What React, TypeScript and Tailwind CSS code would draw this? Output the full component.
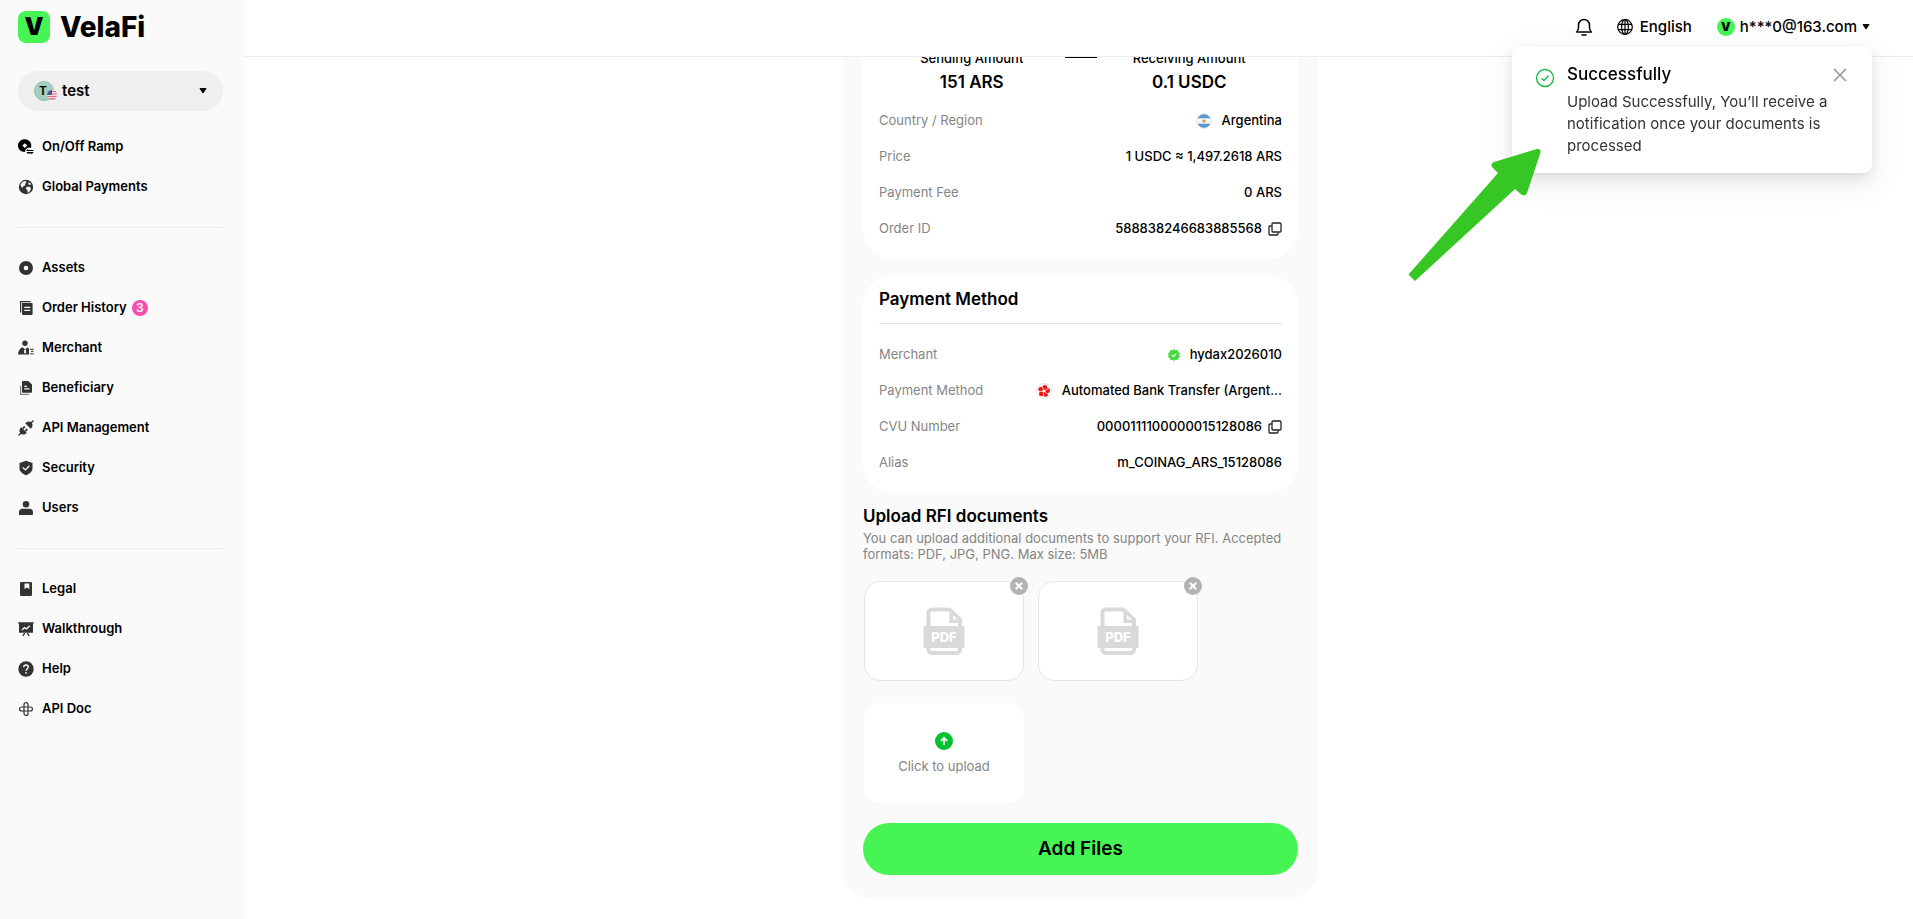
import type { ReactNode } from 'react'

function Icon({ children }: { children: ReactNode }) {
  return (
    <svg viewBox="0 0 16 16" className="size-4 shrink-0 text-[#333]" fill="currentColor" aria-hidden="true">
      {children}
    </svg>
  )
}

function Caret() {
  return (
    <svg viewBox="0 0 8 6" className="h-[6px] w-2 shrink-0" aria-hidden="true">
      <path d="M1 .5h6L4 5z" fill="#000" stroke="#000" strokeLinejoin="round" />
    </svg>
  )
}

const icons = {
  ramp: (
    <Icon>
      <path fill="#000" fillRule="evenodd" d="M6.800 .3a6.300 6.300 0 1 0 .4 12.500V11l2.200-2.200h3.500A6.300 6.300 0 0 0 6.800 .3Zm0 3.900 2.400 2.400-2.400 2.400-2.400-2.400Z" />
      <path fill="#000" d="m8 12 2.200-2.200v1.100h5.300V12zM15.700 13.100l-2.200 2.500v-1.200H8.800v-1.300z" />
    </Icon>
  ),
  globe: (
    <Icon>
      <circle cx="8" cy="8" r="7.200" />
      <path fill="#fafafa" d="M2.500 5.500C3.600 3.300 5.400 2.400 7.600 2.100l.8 1.500L6.900 5l.5 1.400-1.900.4-.6 1.600-1.600-.4ZM8.300 8.200l2.800-.6 2 1.900-1.300 2.700-1.800 1.700-.7-2.800-1.500-1.300ZM10.500 3.200l2.500 1.600-.6 1.300-2-.6Z" />
    </Icon>
  ),
  assets: (
    <Icon>
      <path fillRule="evenodd" d="M8 1a7 7 0 1 0 0 14A7 7 0 0 0 8 1Zm0 4.700a2.300 2.300 0 1 1 0 4.600 2.300 2.300 0 0 1 0-4.600Z" />
    </Icon>
  ),
  orders: (
    <Icon>
      <path d="M2.600 12.500V1.700h10" fill="none" stroke="currentColor" strokeWidth="1.200" />
      <path fillRule="evenodd" d="M4 3h9.800a.8.8 0 0 1 .8.800V14a1 1 0 0 1-1 1H5a1 1 0 0 1-1-1Zm2.300 3.800V8h6V6.800Zm0 3V11h6V9.800Z" />
    </Icon>
  ),
  merchant: (
    <Icon>
      <circle cx="7" cy="3.300" r="2.700" />
      <path fillRule="evenodd" d="M0 14.500c.2-3.700 1.800-6.300 4.500-7.300l2.500 2 2.500-1.700 1.500 1V14.500ZM6.400 9.500h1.400l.4 3-1.100 1.200L6 12.500Z" />
      <path d="M12 9.300h3.800M13 11.400h2.500M12 13.800h3.800" stroke="currentColor" strokeWidth="1" />
    </Icon>
  ),
  beneficiary: (
    <Icon>
      <path d="M2.600 6v8.300h8.600" fill="none" stroke="#888" strokeWidth="1.300" />
      <path fillRule="evenodd" d="M4.800 1h5.400L14 4.600V12a.8.8 0 0 1-.8.8H4.800a.8.8 0 0 1-.8-.8V1.800a.8.8 0 0 1 .8-.8Zm1.500 4.700v1.200H9V5.700Zm0 2.600v1.200h5.200V8.300Z" />
    </Icon>
  ),
  api: (
    <Icon>
      <path d="M.5 15.500 3 13M13 3 15.500.5" stroke="currentColor" strokeWidth="1.400" />
      <path d="M3.300 7.200 8.800 12.700 7.600 13.700C6 15 4 14.700 2.600 13.400 1.300 12 1 10 2.300 8.300ZM7.200 3.300 8.400 2.200C10 1 12 1.200 13.400 2.600 14.800 4 15 6 13.700 7.700L12.700 8.800Z" />
      <path d="m4.800 8.700 2-2M7.300 11.200l2-2" stroke="currentColor" strokeWidth="1.800" />
    </Icon>
  ),
  security: (
    <Icon>
      <path d="M8 .8 14.500 3v5.500c0 3-3 5.400-6.500 6.700-3.500-1.300-6.500-3.700-6.500-6.700V3Z" />
      <path d="m4.800 7.500 2.600 2.400 4-4.200" fill="none" stroke="#fafafa" strokeWidth="1.300" />
    </Icon>
  ),
  users: (
    <Icon>
      <circle cx="8" cy="4.200" r="3.300" />
      <path d="M1 15v-3.200C1 9.500 3 8.700 4.500 8.700h7c1.500 0 3.500.8 3.500 3.100V14a1 1 0 0 1-1 1Z" />
    </Icon>
  ),
  legal: (
    <Icon>
      <path d="M3.200 1h9.600a1.200 1.200 0 0 1 1.200 1.200v11.600a1.200 1.200 0 0 1-1.200 1.200H3.200A1.200 1.200 0 0 1 2 13.800V2.200A1.200 1.200 0 0 1 3.200 1Z" />
      <path d="M6.500 2.500h4.800V8L8.900 6.500 6.500 8Z" fill="#fafafa" />
    </Icon>
  ),
  walkthrough: (
    <Icon>
      <path d="M.3 1.200h15.400v1.600H15v9H1v-9H.3ZM4.300 15l1.500-3h1.500L5.800 15ZM10.200 15l-1.500-3h1.500l1.500 3Z" />
      <path d="m4 9 2.500-2.400 2 1.300 3.300-3.200" fill="none" stroke="#fafafa" strokeWidth="1.400" />
    </Icon>
  ),
  help: (
    <Icon>
      <circle cx="8" cy="8" r="7.700" />
      <path d="M5.700 6.300C5.700 4.800 6.700 4 8 4s2.300.8 2.300 2.100c0 1.500-2.200 1.800-2.200 3.600" fill="none" stroke="#fafafa" strokeWidth="1.400" />
      <circle cx="8.100" cy="11.800" r=".9" fill="#fafafa" />
    </Icon>
  ),
  doc: (
    <Icon>
      <g fill="none" stroke="currentColor" strokeWidth="1.200">
        <path d="M6 10V3.600a2 2 0 0 1 4 0V10M10 6v6.400a2 2 0 0 1-4 0V10" />
        <path d="M10 6h2.400a2 2 0 0 1 0 4H6M10 6H3.600a2 2 0 0 0 0 4H6" />
      </g>
    </Icon>
  ),
}

const navGroups: { icon: ReactNode; label: string; badge?: number }[][] = [
  [
    { icon: icons.ramp, label: 'On/Off Ramp' },
    { icon: icons.globe, label: 'Global Payments' },
  ],
  [
    { icon: icons.assets, label: 'Assets' },
    { icon: icons.orders, label: 'Order History', badge: 3 },
    { icon: icons.merchant, label: 'Merchant' },
    { icon: icons.beneficiary, label: 'Beneficiary' },
    { icon: icons.api, label: 'API Management' },
    { icon: icons.security, label: 'Security' },
    { icon: icons.users, label: 'Users' },
  ],
  [
    { icon: icons.legal, label: 'Legal' },
    { icon: icons.walkthrough, label: 'Walkthrough' },
    { icon: icons.help, label: 'Help' },
    { icon: icons.doc, label: 'API Doc' },
  ],
]

function Sidebar() {
  return (
    <aside className="min-h-screen w-[245px] shrink-0 bg-[#fafafa] pr-[22px] pl-[18px]">
      <a href="#" className="flex items-center gap-[10px] pt-[11px]">
        <span className="flex size-8 items-center justify-center rounded-lg bg-[#46f553] text-2xl leading-8 font-black">V</span>
        <span className="text-[28px] leading-8 font-extrabold">VelaFi</span>
      </a>
      <button className="mt-7 flex h-10 w-full items-center rounded-full bg-[#efefef] px-4 text-[15px] font-semibold">
        <span className="relative flex size-5 items-center justify-center rounded-full border border-[#8fbfae] bg-[#a3cfc0] text-xs">
          <span className="pr-[2px]">T</span>
          <svg viewBox="0 0 10 10" className="absolute -right-1 bottom-0 size-[10px]" aria-hidden="true">
            <circle cx="5" cy="5" r="5" fill="#f3dfe2" />
            <path d="M5 1.500h4M5 4h5M.3 6.500h9.400M1.500 8.800h7" stroke="#e0677a" strokeWidth="1.200" />
            <path d="M5 0a5 5 0 0 0-5 5h5Z" fill="#4a5b8c" />
          </svg>
        </span>
        <span className="ml-2 flex-1 text-left">test</span>
        <Caret />
      </button>
      <nav className="mt-4">
        {navGroups.map((group, i) => (
          <ul key={i} className={i > 0 ? 'mt-5 border-t border-[#ececec] pt-5' : ''}>
            {group.map((item) => (
              <li key={item.label}>
                <a href="#" className="flex h-10 items-center gap-2 text-[13px] font-semibold">
                  {item.icon}
                  {item.label}
                  {item.badge && (
                    <span className="-ml-[3px] flex size-4 items-center justify-center rounded-full bg-[#f650ae] text-xs text-white">
                      {item.badge}
                    </span>
                  )}
                </a>
              </li>
            ))}
          </ul>
        ))}
      </nav>
    </aside>
  )
}

function Header() {
  return (
    <header className="fixed top-0 right-0 left-[245px] z-10 flex h-[57px] items-center justify-end border-b border-[#ececec] bg-white pr-[43px] pb-[2px] text-[15px] font-medium">
      <button aria-label="Notifications">
        <svg viewBox="0 0 18 20" className="h-5 w-[18px]" fill="none" stroke="#000" strokeWidth="1.500" aria-hidden="true">
          <path d="M1.500 15c1.600-1.200 2-2.600 2-4.500V8a5.500 5.500 0 0 1 11 0v2.500c0 1.900.4 3.300 2 4.500Z" strokeLinejoin="round" />
          <path d="M7 18h4" strokeLinecap="round" />
        </svg>
      </button>
      <button className="ml-6 flex items-center gap-[7px]">
        <svg viewBox="0 0 16 16" className="size-4" fill="none" stroke="#000" strokeWidth="1.200" aria-hidden="true">
          <circle cx="8" cy="8" r="7.300" />
          <ellipse cx="8" cy="8" rx="3.400" ry="7.300" />
          <path d="M8 .7v14.600M1.300 5.300h13.400M1.300 10.700h13.400" />
        </svg>
        English
      </button>
      <button className="ml-[25px] flex items-center">
        <span className="flex size-[18px] items-center justify-center rounded-full bg-[#46f553] text-xs font-black">V</span>
        <span className="mr-[5px] ml-[5px]">h***0@163.com</span>
        <Caret />
      </button>
    </header>
  )
}

function CopyButton() {
  return (
    <button aria-label="Copy" className="ml-[6px]">
      <svg viewBox="0 0 14 14" className="size-[14px]" fill="none" stroke="#222" strokeWidth="1.300" aria-hidden="true">
        <rect x="4" y="1" width="9" height="9" rx="1" />
        <path d="M3.500 4H2a1 1 0 0 0-1 1v7a1 1 0 0 0 1 1h7a1 1 0 0 0 1-1v-1.500" />
      </svg>
    </button>
  )
}

function Row({ label, icon, value, copy }: { label: string; icon?: ReactNode; value: string; copy?: boolean }) {
  return (
    <div className="flex h-9 items-center justify-between text-[13px]">
      <dt className="text-[#858585]">{label}</dt>
      <dd className="flex items-center font-medium">
        {icon && <span className="mr-[10px]">{icon}</span>}
        {value}
        {copy && <CopyButton />}
      </dd>
    </div>
  )
}

const flag = (
  <svg viewBox="0 0 16 16" className="size-4" aria-hidden="true">
    <clipPath id="flag"><circle cx="8" cy="8" r="7" /></clipPath>
    <g clipPath="url(#flag)">
      <path d="M0 0h16v16H0z" fill="#f4f4f4" />
      <path d="M0 0h16v5.200H0zM0 10.800h16V16H0z" fill="#5b97cb" />
    </g>
    <circle cx="8" cy="8" r="1.600" fill="#c79a3c" />
    <circle cx="8" cy="8" r="7.400" fill="none" stroke="#e4e4e4" strokeWidth="1" />
  </svg>
)

const verified = (
  <svg viewBox="0 0 12 12" className="size-3" aria-hidden="true">
    <path fill="#43d83c" stroke="#43d83c" strokeLinejoin="round" d="m6 .6 1.500 1.200 1.900-.3.500 1.900 1.600 1L10.800 6l.7 1.700-1.600 1-.5 1.800-1.900-.2L6 11.400l-1.500-1.100-1.900.2-.5-1.800-1.600-1L1.200 6 .5 4.400l1.600-1 .5-1.900 1.900.3Z" />
    <path d="m3.700 6.100 1.600 1.500 3-3.100" fill="none" stroke="#fff" strokeWidth="1.200" />
  </svg>
)

const bank = (
  <svg viewBox="0 0 16 16" className="size-4" aria-hidden="true">
    <circle cx="8" cy="8" r="7.500" fill="#fff" stroke="#e4e4e4" strokeWidth="1" />
    <g fill="#f01818">
      <circle cx="8.800" cy="4.500" r="2.500" />
      <circle cx="11.500" cy="7.600" r="2.500" />
      <circle cx="9.600" cy="11.300" r="2.500" />
      <circle cx="5.500" cy="10.700" r="2.500" />
      <circle cx="4.900" cy="6.200" r="2.500" />
    </g>
    <circle cx="8" cy="8" r="1.300" fill="#fff" />
    <path d="M7.600 7 6 3.500M9 7.500l3.500-2M8.800 8.800l3.200 2.400M7.500 9l-.2 4M7 8 3 8.800" stroke="#fff" strokeWidth=".7" />
  </svg>
)

function FileTile({ name }: { name: string }) {
  return (
    <div className="relative flex h-[100px] w-[160px] items-center justify-center rounded-2xl border border-[#e6e6e6] bg-white">
      <svg viewBox="0 0 42 48" className="h-12 w-[42px]" role="img" aria-label={name}>
        <path d="M5.500 44V6A3.500 3.500 0 0 1 9 2.500h17.500L37 13v29.500a3.500 3.500 0 0 1-3.500 3.500H9a3.500 3.500 0 0 1-3.500-3.500Z" fill="#fff" stroke="#d9d9d9" strokeWidth="4" strokeLinejoin="round" />
        <path d="M26.500 3v13H38v-2.500L28 3Z" fill="#d9d9d9" />
        <path d="M30 8v4.500h4.500Z" fill="#fff" />
        <path d="M.5 19h41v22H.5z" fill="#d9d9d9" />
        <text x="21" y="35" textAnchor="middle" fontSize="13" fontWeight="800" fill="#fff">PDF</text>
      </svg>
      <button aria-label={`Remove ${name}`} className="absolute -top-[5px] -right-[5px] size-[18px] rounded-full bg-[#b3b3b3]">
        <svg viewBox="0 0 18 18" stroke="#fff" strokeWidth="2" aria-hidden="true">
          <path d="m5.700 5.700 6.600 6.600M12.300 5.700l-6.600 6.600" />
        </svg>
      </button>
    </div>
  )
}

function Toast() {
  return (
    <div
      role="status"
      className="fixed top-[47px] right-[41px] z-20 flex w-[360px] items-start rounded-lg bg-white py-4 pr-[25px] pl-[23px] shadow-[0_6px_16px_rgba(0,0,0,0.08),0_3px_6px_-4px_rgba(0,0,0,0.12),0_9px_28px_8px_rgba(0,0,0,0.05)]"
    >
      <svg viewBox="0 0 20 20" className="mt-[5px] size-5 shrink-0" fill="none" stroke="#10b944" strokeWidth="1.300" aria-hidden="true">
        <circle cx="10" cy="10" r="8.500" />
        <path d="m6.500 10.200 2.400 2.300 4.600-4.700" />
      </svg>
      <div className="ml-3 flex-1">
        <h3 className="text-[17px] leading-[22px] font-medium">Successfully</h3>
        <p className="mt-[6px] text-[15px] leading-[22px] text-[#333]">
          Upload Successfully, You’ll receive a<br />notification once your documents is<br />processed
        </p>
      </div>
      <button aria-label="Close" className="mt-[5px]">
        <svg viewBox="0 0 14 14" className="size-[14px]" stroke="#999" strokeWidth="1.600" aria-hidden="true">
          <path d="m1 1 12 12M13 1 1 13" />
        </svg>
      </button>
    </div>
  )
}

export default function App() {
  return (
    <div className="flex min-h-screen bg-white font-[Inter,sans-serif] text-black">
      <Sidebar />
      <Header />
      <main className="flex flex-1 flex-col items-center pl-[3px]">
        <div className="w-[475px] rounded-b-[30px] bg-[#fafafa] px-5 pb-6">
          <section className="rounded-b-[30px] bg-white px-4 pt-[50px] pb-3">
            <div className="grid grid-cols-[1fr_32px_1fr] text-center">
              <div>
                <p className="text-[13px] leading-4 font-medium">Sending Amount</p>
                <p className="mt-1 text-[17px] leading-6 font-semibold">151 ARS</p>
              </div>
              <div className="h-2 border-b-2 border-black" />
              <div>
                <p className="text-[13px] leading-4 font-medium">Receiving Amount</p>
                <p className="mt-1 text-[17px] leading-6 font-semibold">0.1 USDC</p>
              </div>
            </div>
            <dl className="mt-[9px]">
              <Row label="Country / Region" icon={flag} value="Argentina" />
              <Row label="Price" value="1 USDC ≈ 1,497.2618 ARS" />
              <Row label="Payment Fee" value="0 ARS" />
              <Row label="Order ID" value="588838246683885568" copy />
            </dl>
          </section>

          <section className="mt-4 rounded-[30px] bg-white px-4 py-3">
            <h2 className="border-b border-[#e2e2e2] pb-3 text-[17px] leading-6 font-semibold">Payment Method</h2>
            <dl className="mt-[13px]">
              <Row label="Merchant" icon={verified} value="hydax2026010" />
              <Row label="Payment Method" icon={bank} value="Automated Bank Transfer (Argent..." />
              <Row label="CVU Number" value="0000111100000015128086" copy />
              <Row label="Alias" value="m_COINAG_ARS_15128086" />
            </dl>
          </section>

          <section className="mt-[11px]">
            <h2 className="text-[17px] leading-6 font-semibold">Upload RFI documents</h2>
            <p className="mt-[2px] text-[13px] leading-4 text-[#858585]">
              You can upload additional documents to support your RFI. Accepted formats: PDF, JPG, PNG. Max size: 5MB
            </p>
            <div className="mt-[19px] flex flex-wrap gap-x-[14px] gap-y-[22px] pl-px">
              <FileTile name="Document 1" />
              <FileTile name="Document 2" />
              <button className="flex h-[100px] w-[160px] flex-col items-center justify-center gap-2 rounded-2xl bg-white text-[13px] leading-4 text-[#858585]">
                <svg viewBox="0 0 18 18" className="size-[18px]" aria-hidden="true">
                  <circle cx="9" cy="9" r="9" fill="#05c02f" />
                  <path d="M9 13V6.500M5.700 9 9 5.800 12.300 9" fill="none" stroke="#fff" strokeWidth="1.700" />
                </svg>
                Click to upload
              </button>
            </div>
          </section>

          <button className="mt-5 h-[52px] w-full rounded-full bg-[#46f553] text-[19px] font-semibold">Add Files</button>
        </div>
      </main>
      <Toast />
      <svg viewBox="0 0 136 136" className="pointer-events-none fixed top-[147px] right-[372px] z-30 size-[136px]" aria-hidden="true">
        <path
          d="m3.500 127.500 6.500 6.500L110 42l7 6q3.500 1.500 5-2L135.500 5.500Q136 1.500 132 2L89 15q-4 1.500-2 5l6 6Z"
          fill="#36c725"
        />
      </svg>
    </div>
  )
}
